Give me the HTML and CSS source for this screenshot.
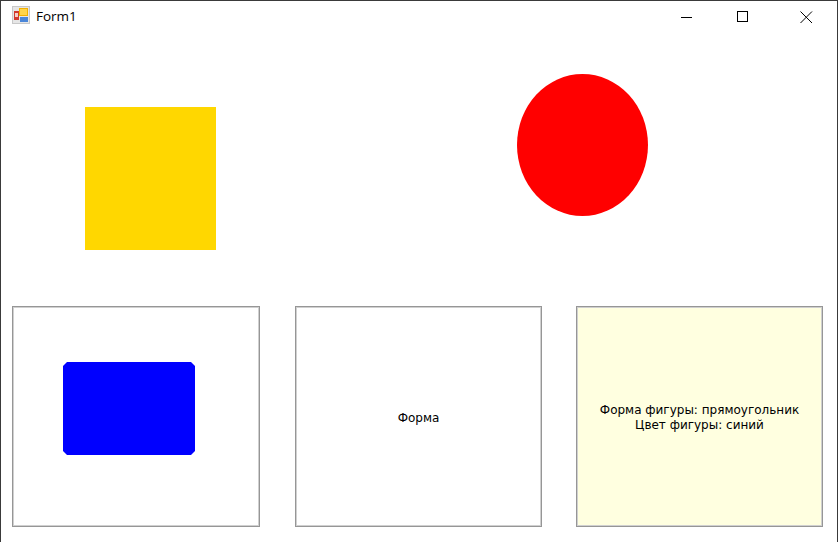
FILE: index.html
```html
<!DOCTYPE html>
<html lang="ru">
<head>
<meta charset="utf-8">
<title>Form1</title>
<link rel="stylesheet" href="styles.css">
</head>
<body>
<div class="window">
  <div class="titlebar">
    <svg class="app-icon" width="18" height="18" viewBox="0 0 18 18">
      <rect x="0.5" y="0.5" width="17" height="17" fill="#e6e6e6" stroke="#c8c8c8"/>
      <rect x="2" y="5" width="5" height="9" fill="#d23a2e"/>
      <rect x="3" y="7" width="3" height="4" fill="#f4d0c8"/>
      <rect x="7" y="2" width="9" height="8" fill="#f2b000"/>
      <rect x="8" y="3" width="7" height="6" fill="#ffd54a"/>
      <rect x="8" y="11" width="8" height="5" fill="#4a86d8"/>
    </svg>
    <span class="title">Form1</span>
    <div class="controls">
      <span class="ctl">
        <svg width="12" height="12" viewBox="0 0 12 12"><path d="M0 6.5H11" stroke="#000" stroke-width="1"/></svg>
      </span>
      <span class="ctl">
        <svg width="12" height="12" viewBox="0 0 12 12"><rect x="0.5" y="0.5" width="10" height="10" fill="none" stroke="#000" stroke-width="1"/></svg>
      </span>
      <span class="ctl">
        <svg width="13" height="13" viewBox="0 0 13 13"><path d="M0.5 0.5L12 12M12 0.5L0.5 12" stroke="#000" stroke-width="1"/></svg>
      </span>
    </div>
  </div>
  <div class="client">
    <div class="top-row">
      <div class="square"></div>
      <div class="circle"></div>
    </div>
    <div class="bottom-row">
      <div class="panel panel-shape">
        <div class="blue-rect"></div>
      </div>
      <div class="panel panel-text">
        <span>Форма</span>
      </div>
      <div class="panel panel-info">
        <span>Форма фигуры: прямоугольник<br>Цвет фигуры: синий</span>
      </div>
    </div>
  </div>
</div>
</body>
</html>
```
FILE: styles.css
```css
html, body {
  margin: 0;
  padding: 0;
  background: #ffffff;
}
.window {
  width: 838px;
  height: 542px;
  box-sizing: border-box;
  border: 1px solid #3a3a3a;
  border-bottom: none;
  background: #ffffff;
  overflow: hidden;
  font-family: "DejaVu Sans", Verdana, sans-serif;
}
.titlebar {
  height: 30px;
  display: flex;
  align-items: center;
}
.app-icon {
  margin-left: 11px;
  margin-top: -2px;
}
.title {
  margin-left: 6px;
  font-family: "Open Sans", "Noto Sans", sans-serif;
  font-size: 13.5px;
  color: #000;
  margin-top: -1px;
}
.controls {
  margin-left: auto;
  display: flex;
  height: 100%;
}
.ctl {
  width: 58px;
  display: flex;
  align-items: center;
  justify-content: center;
}
.ctl:nth-child(1) { width: 52px; padding-top: 1px; }
.ctl:nth-child(2) { width: 60px; padding-top: 1px; }
.ctl:nth-child(3) { width: 62px; padding-top: 2px; margin-left: 2px; }
.client {
  display: flex;
  flex-direction: column;
}
.top-row {
  height: 275px;
  display: flex;
  align-items: flex-start;
}
.square {
  width: 131px;
  height: 143px;
  background: #ffd700;
  margin-left: 84px;
  margin-top: 76px;
}
.circle {
  width: 131px;
  height: 142px;
  background: #ff0000;
  border-radius: 50%;
  margin-left: 301px;
  margin-top: 43px;
}
.bottom-row {
  display: flex;
  padding-left: 11px;
}
.panel {
  box-sizing: border-box;
  height: 221px;
  border: 1px solid #969696;
  box-shadow: inset 0 0 0 1px #d0d0d0;
  display: flex;
}
.panel-shape {
  width: 248px;
}
.panel-text {
  width: 247px;
  margin-left: 35px;
  align-items: center;
  justify-content: center;
  font-size: 12px;
  color: #000;
}
.panel-text span {
  margin-top: 2px;
}
.panel-info {
  width: 247px;
  margin-left: 34px;
  background: #ffffe0;
  align-items: center;
  justify-content: center;
  text-align: center;
  font-size: 12px;
  line-height: 15px;
  color: #000;
}
.panel-info span {
  margin-top: 2px;
}
.blue-rect {
  width: 132px;
  height: 93px;
  margin-left: 50px;
  margin-top: 55px;
  background: #0000ff;
  clip-path: polygon(4px 0, calc(100% - 4px) 0, 100% 4px, 100% calc(100% - 4px), calc(100% - 4px) 100%, 4px 100%, 0 calc(100% - 4px), 0 4px);
}
```
